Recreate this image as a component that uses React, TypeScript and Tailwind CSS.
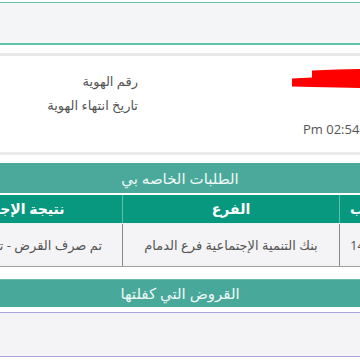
const font = { fontFamily: '"Open Sans", "DejaVu Sans", sans-serif' };

const App = () => {
  return (
    <div
      dir="rtl"
      style={font}
      className="w-[360px] h-[360px] overflow-hidden bg-white text-[#555]"
    >
      {/* top search strip */}
      <div className="mt-[2px] h-[43px] border-t border-b-2 border-[#62c3ad] bg-[#f4f5f7]"></div>
      <div className="h-[8px]"></div>
      <div className="h-[3px] bg-[#e8e8e8]"></div>

      {/* profile info */}
      <div className="flex h-[96px]">
        <div dir="ltr" className="w-[220px] shrink-0 whitespace-nowrap">
          <div className="pl-[152px] pt-[12px] h-[32px]">
            <svg width="68" height="20" viewBox="0 0 68 20" className="block">
              <path d="M0 10.5 L20 9.5 L20 2.5 L45 1.5 L68 1 L68 20 L45 19.5 L20 19 L0 18.5 Z" fill="#ff0000" />
            </svg>
          </div>
          <div className="pl-[163px] mt-[31px] text-[13px] leading-[20px] text-[#555]">Pm 02:54:11</div>
        </div>
        <div className="w-[140px] shrink-0 pr-[2px] pt-[13px] text-[13px] leading-[24px] text-[#555] text-right">
          <div>رقم الهوية</div>
          <div>تاريخ انتهاء الهوية</div>
        </div>
      </div>
      <div className="h-[3px] bg-[#ececec]"></div>
      <div className="h-[8px]"></div>

      {/* my requests */}
      <div className="h-[30px] bg-[#4aa99a] text-[#eef8f6] text-[15px] leading-[30px] text-center">
        الطلبات الخاصه بي
      </div>
      <div className="h-[2px]"></div>
      <div className="overflow-hidden">
        <div className="w-max mr-[-79px]">
          <div className="flex h-[28px] bg-[#07987f] text-white font-bold text-[14px] leading-[28px] whitespace-nowrap">
            <div className="w-[100px] border-l border-[#5cc0ae] text-left pl-[10px]">رقم الطلب</div>
            <div className="w-[217px] border-l border-[#5cc0ae] text-center">الفرع</div>
            <div className="w-[200px] text-center">نتيجة الإجراء</div>
          </div>
          <div className="flex h-[44px] bg-[#f4f4f6] border-t border-[#e6f3f0] border-b border-b-[#a0a0a0] text-[13px] leading-[42px] text-[#555] whitespace-nowrap">
            <div className="w-[100px] border-l border-[#888] text-left pl-[10px]">1443</div>
            <div className="w-[217px] border-l border-[#888] text-center">بنك التنمية الإجتماعية فرع الدمام</div>
            <div className="w-[200px] text-right pr-[20px] overflow-hidden">تم صرف القرض - تم صرف القرض</div>
          </div>
        </div>
      </div>

      <div className="h-[12px]"></div>
      {/* loans I guaranteed */}
      <div className="h-[28px] bg-[#48a99b] border-t border-[#6cbcb0] text-[#eef8f6] text-[15px] leading-[26px] text-center">
        القروض التي كفلتها
      </div>
      <div className="h-[5px]"></div>
      <div className="h-[45px] bg-[#f4f4f7] border-y border-[#a7a4dc]"></div>
    </div>
  );
};

export default App;
